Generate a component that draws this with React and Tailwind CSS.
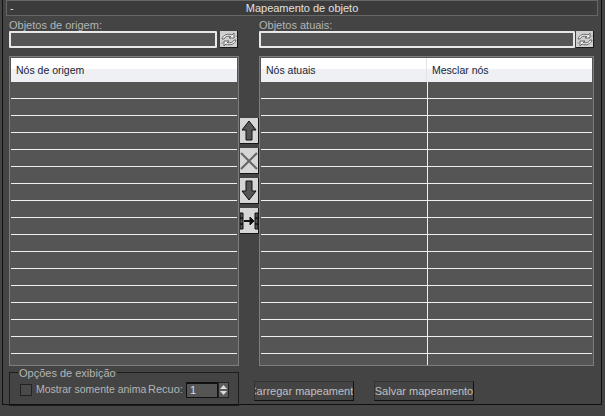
const font = { fontFamily: '"Liberation Sans", sans-serif' };

function RefreshIcon() {
  return (
    <button className="w-[18px] h-[17px] bg-[#d0d0d0] border-r border-b border-[#1a1a1a] flex items-center justify-center shrink-0">
      <svg width="16" height="15" viewBox="0 0 16 15" fill="none" stroke="#666" strokeWidth="1">
        <path d="M1 7C2 3 7 1 11 3L13 1V6H8L10 4.5C7 3.5 4 4.5 3 7Z" fill="#f6f6f6" />
        <path d="M15 8C14 12 9 14 5 12L3 14V9H8L6 10.5C9 11.5 12 10.5 13 8Z" fill="#f6f6f6" />
        <path d="M0 11H3M13 4H16" stroke="#999" />
      </svg>
    </button>
  );
}

function Rows({ cols }) {
  return (
    <div className="h-[283px] overflow-hidden">
      {Array.from({ length: 17 }).map((_, i) => (
        <div key={i} className="h-[17px] border-b border-[#f0f0f0] flex">
          {cols && <div className="w-[167px] border-r border-[#f0f0f0]" />}
        </div>
      ))}
    </div>
  );
}

function SideButton({ children }) {
  return (
    <button className="ml-px w-[19px] h-[26px] bg-[#d6d6d6] border-b border-r border-[#161616] flex items-center justify-center overflow-hidden">
      {children}
    </button>
  );
}

function Header({ children }) {
  return (
    <div className="h-[24px] flex bg-gradient-to-b from-white from-45% to-[#eef0f3] to-45% text-[#14263a] text-[10.5px] leading-[25px]">
      {children}
    </div>
  );
}

export default function App() {
  return (
    <div style={font} className="w-[605px] h-[416px] bg-[#444444] overflow-hidden text-[11px] text-[#b4b4b4] pt-[8px] pl-[2px]">
      <div className="relative w-[600px] h-[405px] border-l border-r border-b border-[#111]">
        {/* barra de titulo */}
        <div className="-mt-[8px] ml-[3px] w-[592px] h-[16px] bg-[#3c3c3c] border border-[#666] flex items-center text-[#e0e0e0] text-[11px] leading-[16px]">
          <span className="w-[10px] pl-[3px]">-</span>
          <span className="flex-1 text-center pr-[10px]">Mapeamento de objeto</span>
        </div>

        <div className="flex pl-[6px]">
          {/* origem */}
          <div className="w-[230px]">
            <div className="h-[15px] leading-[18px]">Objetos de origem:</div>
            <div className="flex gap-[3px]">
              <div className="w-[208px] h-[17px] bg-[#555] border-2 border-[#e8e8e8] rounded-[1px]" />
              <RefreshIcon />
            </div>
            <div className="mt-[8px] h-[310px] border border-[#7d7d7d] bg-[#555555] pt-px px-px">
              <Header>
                <span className="pl-[5px]">Nós de origem</span>
              </Header>
              <Rows />
            </div>
          </div>

          {/* botoes do meio */}
          <div className="w-[20px] flex flex-col gap-[4px] pt-[102px]">
            <SideButton>
              <svg width="16" height="21" viewBox="0 0 16 21" fill="#555" stroke="#111">
                <path d="M8 1 15 10H11V20H5V10H1Z" />
              </svg>
            </SideButton>
            <SideButton>
              <svg width="18" height="20" viewBox="0 0 18 20" stroke="#666" strokeWidth="2">
                <path d="M1 2 17 18M17 2 1 18" />
              </svg>
            </SideButton>
            <SideButton>
              <svg width="16" height="21" viewBox="0 0 16 21" fill="#555" stroke="#111">
                <path d="M8 20 15 11H11V1H5V11H1Z" />
              </svg>
            </SideButton>
            <SideButton>
              <svg width="18" height="22" viewBox="0 0 18 22" fill="#555" stroke="#111">
                <path d="M0 3H3V8H0ZM0 8H3V14H0ZM0 14H3V19H0Z" />
                <path d="M15 3H18V8H15ZM15 8H18V14H15ZM15 14H18V19H15Z" />
                <path d="M4 11H11" strokeWidth="2" />
                <path d="M10 7 14 11 10 15Z" fill="#111" />
              </svg>
            </SideButton>
          </div>

          {/* atuais */}
          <div className="w-[335px]">
            <div className="h-[15px] leading-[18px]">Objetos atuais:</div>
            <div className="flex gap-px">
              <div className="w-[316px] h-[17px] bg-[#555] border-2 border-[#e8e8e8] rounded-[1px]" />
              <RefreshIcon />
            </div>
            <div className="mt-[8px] h-[310px] border border-[#7d7d7d] bg-[#555555] pt-px px-px">
              <Header>
                <span className="w-[166px] pl-[5px] border-r border-[#e4e4e4]">Nós atuais</span>
                <span className="pl-[5px]">Mesclar nós</span>
              </Header>
              <Rows cols />
            </div>
          </div>
        </div>

        {/* rodape */}
        <div className="flex pl-[6px] mt-[6px]">
          <div className="relative w-[230px] h-[34px] border border-[#1c1c1c]">
            <span className="absolute left-[8px] -top-[6px] px-px bg-[#444444] leading-[13px] whitespace-nowrap">Opções de exibição</span>
            <div className="flex items-center h-[17px] pl-[10px] mt-[8px] whitespace-nowrap">
              <div className="w-[12px] h-[12px] bg-[#4a4a4a] border border-[#222] shrink-0" />
              <span className="w-[112px] ml-[4px] text-[10.5px] overflow-hidden">Mostrar somente anima</span>
              <span className="w-[38px]">Recuo:</span>
              <div className="w-[32px] h-[16px] bg-[#555] border border-t-2 border-[#111] text-[#ddd] leading-[12px] pl-[3px] shrink-0">1</div>
              <div className="w-[11px] h-[16px] bg-[#5c5c5c] border border-[#222] shrink-0 flex flex-col items-center justify-center gap-[2px]">
                <svg width="7" height="4" viewBox="0 0 7 4" fill="#ddd"><path d="M3.5 0 7 4H0Z" /></svg>
                <svg width="7" height="4" viewBox="0 0 7 4" fill="#ddd"><path d="M3.5 4 7 0H0Z" /></svg>
              </div>
            </div>
          </div>
          <button className="ml-[15px] mt-[9px] w-[100px] h-[20px] bg-[#444] border border-t-[#333] border-l-[#333] border-r-[#111] border-b-[#111] overflow-hidden whitespace-nowrap flex justify-center text-[#c0c0c0] leading-[19px]">
            Carregar mapeamento
          </button>
          <button className="ml-[20px] mt-[9px] w-[100px] h-[20px] bg-[#444] border border-t-[#333] border-l-[#333] border-r-[#111] border-b-[#111] overflow-hidden whitespace-nowrap flex justify-center text-[#c0c0c0] leading-[19px]">
            Salvar mapeamento
          </button>
        </div>
      </div>
    </div>
  );
}
